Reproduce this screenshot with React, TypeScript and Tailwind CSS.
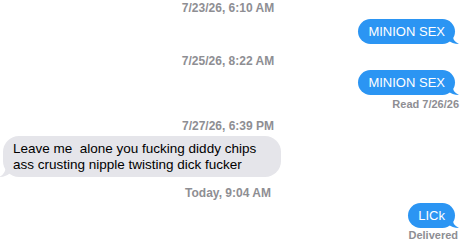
import React from "react";

const font = { fontFamily: '"Liberation Sans", Arial, sans-serif' };

function Stamp({ text, className }: { text: string; className: string }) {
  return (
    <div className={`pr-[12px] text-center text-[12px] leading-[14px] font-bold text-[#8e8e93] ${className}`}>
      {text}
    </div>
  );
}

function Sent({ text, className }: { text: string; className: string }) {
  return (
    <div className={`flex justify-end pr-[13px] ${className}`}>
      <div className="relative h-[25px] rounded-[13px] bg-[#2b95f3] px-[10px] text-[13px] leading-[25px] text-white">
        {text}
        <svg className="absolute -right-[4px] bottom-0" width="11" height="12" viewBox="0 0 11 12">
          <path d="M0 0 L4 0 Q4 9 11 12 Q4 12 0 8 Z" fill="#2b95f3" />
        </svg>
      </div>
    </div>
  );
}

function Note({ text, className }: { text: string; className: string }) {
  return <div className={`text-right text-[11px] leading-[13px] font-bold text-[#8e8e93] ${className}`}>{text}</div>;
}

export default function App() {
  return (
    <div className="flex h-[248px] w-[468px] flex-col overflow-hidden bg-white" style={font}>
      <Stamp text="7/23/26, 6:10 AM" className="mt-[1px]" />
      <Sent text="MINION SEX" className="mt-[4px]" />
      <Stamp text="7/25/26, 8:22 AM" className="mt-[10px]" />
      <Sent text="MINION SEX" className="mt-[2px]" />
      <Note text="Read 7/26/26" className="mt-[3px] pr-[9px]" />
      <Stamp text="7/27/26, 6:39 PM" className="mt-[8px]" />
      <div className="mt-[3px] flex pl-[3px]">
        <div className="relative rounded-[16px] bg-[#e5e5ea] pt-[5px] pb-[4px] pl-[10px] pr-[25px] text-[13.5px] leading-[16px] whitespace-pre text-black">
          {"Leave me  alone you fucking diddy chips\nass crusting nipple twisting dick fucker"}
          <svg className="absolute -left-[4px] bottom-0" width="11" height="12" viewBox="0 0 11 12">
            <path d="M11 0 L7 0 Q7 9 0 12 Q7 12 11 8 Z" fill="#e5e5ea" />
          </svg>
        </div>
      </div>
      <Stamp text="Today, 9:04 AM" className="mt-[9px]" />
      <Sent text="LICk" className="mt-[3px]" />
      <Note text="Delivered" className="mt-[1px] pr-[10px]" />
    </div>
  );
}
